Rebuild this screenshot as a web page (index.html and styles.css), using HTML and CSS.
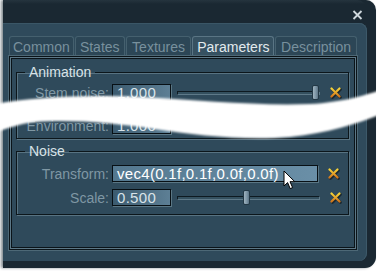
FILE: index.html
```html
<!doctype html>
<html lang="en">

<head>
  <meta charset="utf-8">
  <title>Material editor</title>
  <link rel="stylesheet" href="styles.css">
</head>

<body>
  <div class="window">
    <div class="titlebar">
      <svg class="close" width="11" height="10" viewBox="0 0 11 10"><path d="M1.5 1 L9.5 9 M9.5 1 L1.5 9" /></svg>
    </div>

    <div class="panel">
      <ul class="tabs">
        <li class="tab tab-common">Common</li>
        <li class="tab tab-states">States</li>
        <li class="tab tab-textures">Textures</li>
        <li class="tab tab-params active">Parameters</li>
        <li class="tab tab-desc">Description</li>
      </ul>

      <div class="frame">
        <fieldset class="group group-anim">
          <legend>Animation</legend>
          <div class="row">
            <label>Stem noise:</label>
            <span class="field">1.000</span>
            <span class="slider"><span class="thumb thumb-end"></span></span>
            <svg class="reset" viewBox="0 0 12 12"><use href="#cross-shadow" /><use href="#cross" /></svg>
          </div>
          <div class="row row-gap">
            <label>Environment:</label>
            <span class="field">1.000</span>
          </div>
        </fieldset>

        <fieldset class="group group-noise">
          <legend>Noise</legend>
          <div class="row">
            <label>Transform:</label>
            <span class="field field-wide">vec4(0.1f,0.1f,0.0f,0.0f)</span>
            <svg class="reset" viewBox="0 0 12 12"><use href="#cross-shadow" /><use href="#cross" /></svg>
          </div>
          <div class="row row-next">
            <label>Scale:</label>
            <span class="field">0.500</span>
            <span class="slider"><span class="thumb thumb-mid"></span></span>
            <svg class="reset" viewBox="0 0 12 12"><use href="#cross-shadow" /><use href="#cross" /></svg>
          </div>
        </fieldset>
      </div>
    </div>
  </div>

  <!-- shared cross glyph -->
  <svg class="defs" width="0" height="0">
    <defs>
      <linearGradient id="crossfill" x1="0" y1="0" x2="0" y2="1">
        <stop offset="0" stop-color="#f4d23a" />
        <stop offset="1" stop-color="#d3761a" />
      </linearGradient>
      <path id="cross-shadow" d="M2.5 2.5 L10.5 10.5 M10.5 2.5 L2.5 10.5" stroke="#10181d" stroke-opacity=".7" stroke-width="2.6" stroke-linecap="round" />
      <path id="cross" d="M1.5 1.5 L9.5 9.5 M9.5 1.5 L1.5 9.5" stroke="url(#crossfill)" stroke-width="2.2" stroke-linecap="round" />
    </defs>
  </svg>

  <!-- torn-paper brush stroke over the middle -->
  <svg class="tear" viewBox="0 0 377 271">
    <filter id="soft"><feGaussianBlur stdDeviation="1.3" /></filter>
    <path filter="url(#soft)" fill="#fff" d="M-6 104 C 30 98, 80 94, 140 97 C 200 100, 255 106, 310 104 C 345 102, 365 95, 384 89 L 384 113 C 362 122, 330 133, 290 137 C 245 141, 195 135, 155 129 C 115 123, 70 119, 35 122 C 18 124, 6 129, -6 133 Z" />
  </svg>

  <svg class="cursor" width="13" height="20" viewBox="0 0 13 20">
    <path d="M1 1 L1 16 L4.6 12.6 L7.2 18.6 L9.6 17.6 L7 11.7 L11.8 11.7 Z" fill="#fff" stroke="#000" stroke-width="1" stroke-linejoin="round" />
  </svg>
</body>

</html>
```

FILE: styles.css
```css
html, body { margin:0; padding:0; background:#fff; }
body { position:relative; width:377px; height:271px; overflow:hidden; font-family:"Liberation Sans",Arial,sans-serif; font-size:14px; }

.window { margin-left:3px; width:373px; height:268px; box-sizing:border-box; padding:0 9px 7px 0; background:#1a2832; border-radius:0 10px 11px 0; box-shadow:-2px 0 3px rgba(30,45,55,.55); display:flex; flex-direction:column; }
.titlebar { height:23px; flex:none; position:relative; background:linear-gradient(#25343e, #1a2832 4px); border-radius:0 10px 0 0; }
.close { position:absolute; left:349px; top:10px; }
.close path { stroke:#cfd8dd; stroke-width:1.8; fill:none; }

.panel { flex:1; display:flex; flex-direction:column; padding:13px 10px 11px 6px; background:#2f4a5b; border-radius:0 8px 8px 0; box-shadow:inset 0 1px 0 #3a5666, inset -1px 0 0 #3d5969; }

.tabs { list-style:none; margin:0; padding:0; display:flex; gap:1px; height:20px; }
.tab { box-sizing:border-box; height:20px; line-height:20px; text-align:center; color:#78909d; background:#2c4656; border:1px solid #45606e; border-bottom:0; border-radius:3px 3px 0 0; }
.tab.active { color:#e2eaee; background:#365161; border-color:#5a7584; }
.tab-common { width:65px; }
.tab-states { width:50px; }
.tab-textures { width:66px; }
.tab-params { width:82px; }
.tab-desc { width:82px; }

.frame { flex:1; width:348px; box-sizing:border-box; padding:0 7px 0 6px; border:1px solid #0b1419; box-shadow:inset 0 0 0 1px #5c7786, inset 0 0 0 2px #0b1419, 0 0 0 1px #4d6876; }

.group { margin:0; padding:0; border:1px solid #0c161b; box-shadow:1px 1px 0 #587382, inset 1px 1px 0 #587382; min-width:0; }
.group legend { margin-left:8px; padding:0 4px; line-height:16px; color:#d8e2e7; }
.group-anim { margin-top:7px; padding:4px 0 4px; }
.group-noise { margin-top:4px; padding:6px 0 8px; }

.row { display:flex; align-items:center; height:17px; }
.row-gap { margin-top:16px; }
.row-next { margin-top:7px; }
.row label { width:92px; margin-right:3px; text-align:right; color:#7f97a4; white-space:nowrap; }

.field { box-sizing:border-box; width:59px; height:17px; line-height:15px; padding-left:4px; font-size:15px; letter-spacing:.3px; color:#d9e3e9; border:1px solid #081015; background:linear-gradient(to right, #3c5b6f, #5d7f95); box-shadow:1px 1px 0 #5a7684; white-space:nowrap; }
.field-wide { width:206px; color:#fff; background:linear-gradient(to right, #54788f, #6a8fa7); }

.slider { position:relative; width:141px; height:2px; margin-left:6px; border-top:1px solid #0e1a21; border-bottom:1px solid #5e7988; border-left:1px solid #0e1a21; border-right:1px solid #5e7988; background:#34505f; }
.thumb { position:absolute; top:-7px; width:7px; height:15px; box-sizing:border-box; border:1px solid #233845; border-radius:2px; background:linear-gradient(to right, #9fb3bf, #7b93a3 60%, #5d7586); }
.thumb-end { left:134px; }
.thumb-mid { left:65px; }

.reset { width:12px; height:12px; margin-left:10px; }

.defs { position:absolute; }
.tear { position:absolute; left:0; top:0; width:377px; height:271px; pointer-events:none; }
.cursor { position:absolute; left:283px; top:170px; pointer-events:none; }
```
